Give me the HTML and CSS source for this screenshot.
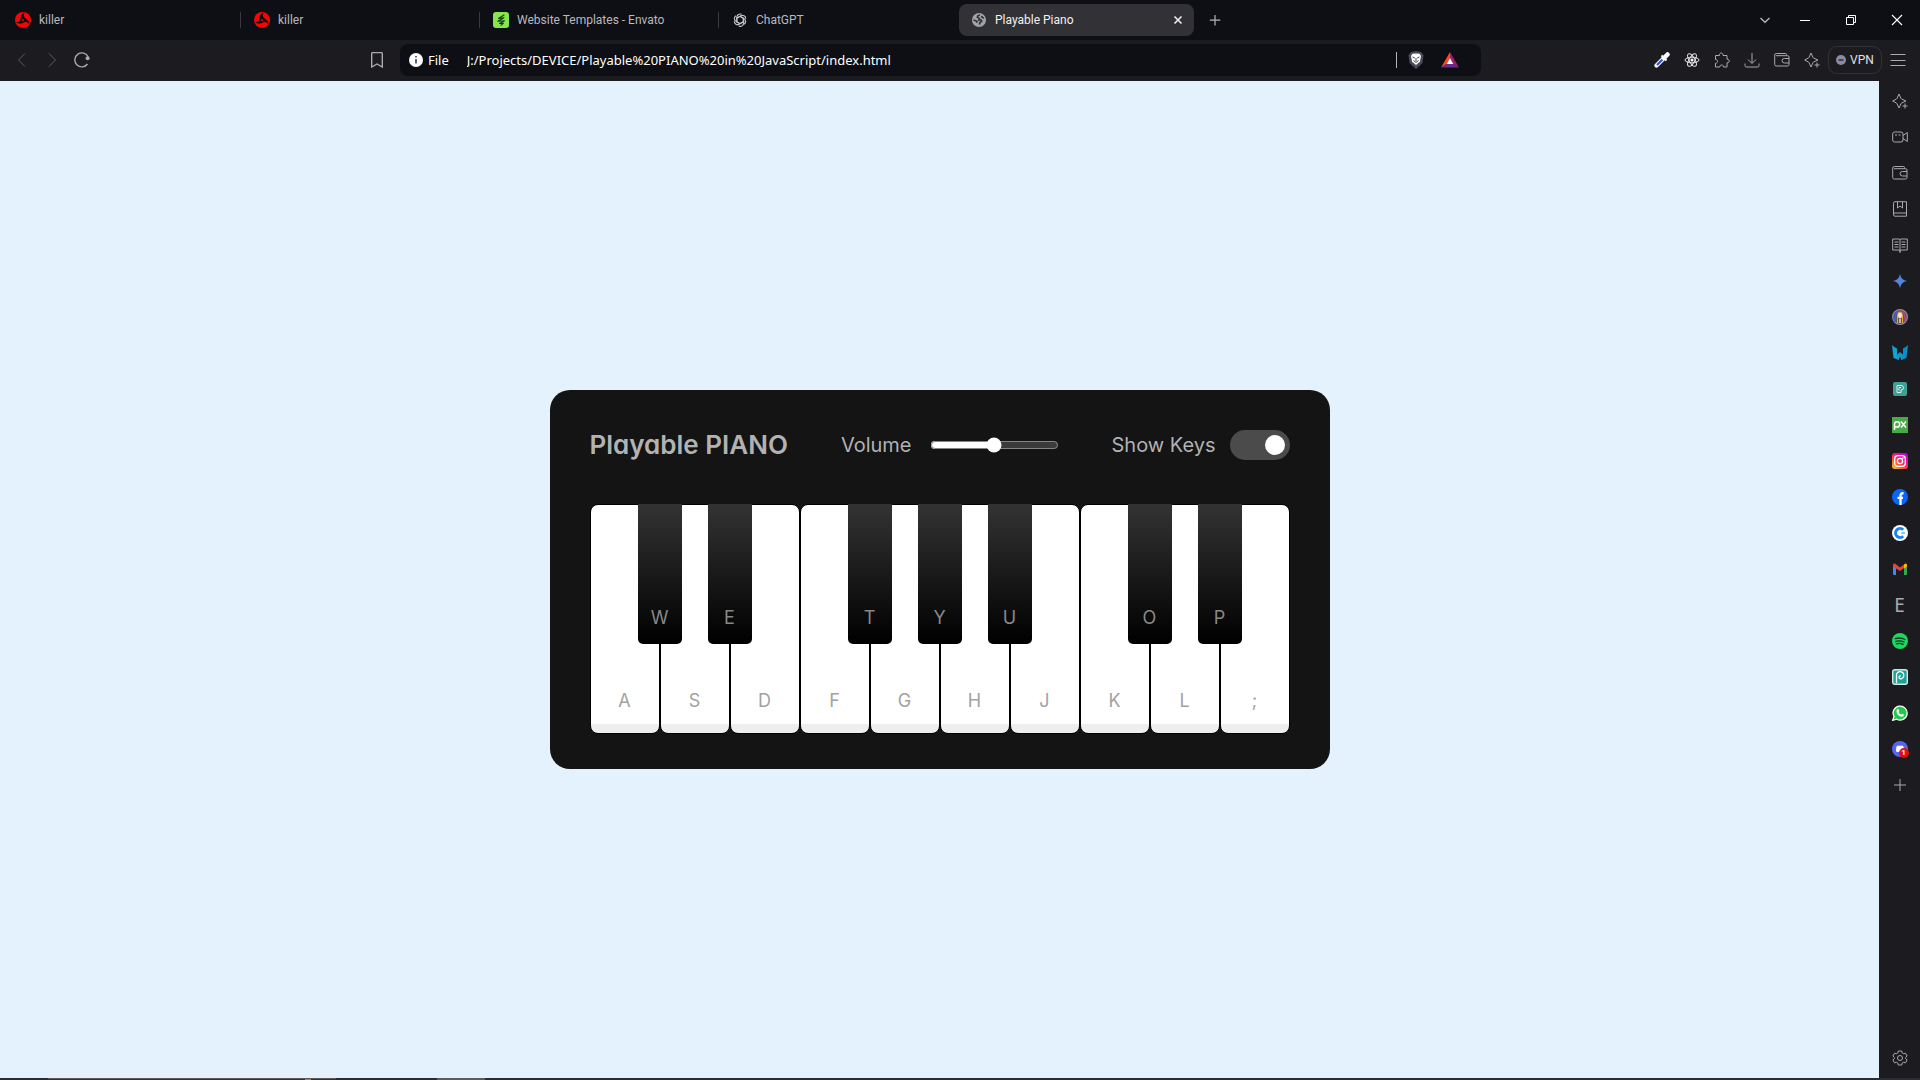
FILE: index.html
```html
<!DOCTYPE html>
<html lang="en">
<head>
<meta charset="utf-8">
<title>Playable Piano</title>
<link rel="stylesheet" href="styles.css">
</head>
<body>
<header class="tabstrip">
  <nav class="tabs" aria-label="Tabs">
    <a class="tab" href="#t1"><svg class="fav" viewBox="0 0 16 16"><circle cx="8" cy="8" r="8" fill="#f50505"/><g fill="#160505"><circle cx="8" cy="8" r="2.600"/><path d="M6 8C5 5 6 2 9.500 .5C8.500 3 9 5 10 6.500zM9 5.500C12 7 14.500 9 14.500 12C12.500 10 10 9.500 8 10zM9 10.500C7 12 3.500 12 1 10C4 10.500 5.500 8.500 6 6.500z"/></g><circle cx="8" cy="8" r="1" fill="#f50505"/></svg><span>killer</span></a>
    <a class="tab" href="#t2"><svg class="fav" viewBox="0 0 16 16"><circle cx="8" cy="8" r="8" fill="#f50505"/><g fill="#160505"><circle cx="8" cy="8" r="2.600"/><path d="M6 8C5 5 6 2 9.500 .5C8.500 3 9 5 10 6.500zM9 5.500C12 7 14.500 9 14.500 12C12.500 10 10 9.500 8 10zM9 10.500C7 12 3.500 12 1 10C4 10.500 5.500 8.500 6 6.500z"/></g><circle cx="8" cy="8" r="1" fill="#f50505"/></svg><span>killer</span></a>
    <a class="tab" href="#t3"><svg class="fav" viewBox="0 0 16 16"><rect width="16" height="16" rx="3" fill="#87e64b"/><path d="M11 3L5.500 6.500L11 5.700L4.800 9.300L11.500 8.700L6.500 11.500L10.500 11.200L8 13.300" fill="none" stroke="#123c12" stroke-width="1.100" stroke-linejoin="round" stroke-linecap="round"/></svg><span>Website Templates - Envato</span></a>
    <a class="tab" href="#t4"><svg class="fav" viewBox="1.500 1.500 13 13" fill="none" stroke="#c4c4c8" stroke-width=".9"><path d="M8 5L11 6.700V10.500A2.700 2.700 0 0 1 7 12.800"/><path d="M10.600 6.500L10.600 9.500L7.300 11.400A2.700 2.700 0 0 1 3.300 9.100"/><path d="M10.600 9.500L8 11L4.700 9.100A2.700 2.700 0 0 1 4.700 4.500"/><path d="M8 11L5.400 9.500V5.700A2.700 2.700 0 0 1 9.300 3.400"/><path d="M5.400 9.500V6.500L8.700 4.600A2.700 2.700 0 0 1 12.700 6.900"/><path d="M5.400 6.500L8 5L11.300 6.900A2.700 2.700 0 0 1 11.300 11.500"/></svg><span>ChatGPT</span></a>
    <a class="tab tab-active" href="#t5" aria-current="page"><svg class="fav" viewBox="0 0 16 16"><circle cx="8" cy="8" r="7" fill="#a0a3a8"/><path d="M9 3Q6 3.500 6.500 5.500Q9.500 6 8 8Q11.500 7.500 10.500 9.500Q8.500 10 8.500 12.500M2.500 8Q5.500 8.500 6.500 10.500M10.500 4Q11 6 13 6" fill="none" stroke="#333237" stroke-width="1.700"/></svg><span>Playable Piano</span></a>
    <button class="tab-close" aria-label="Close tab"><svg viewBox="0 0 16 16" stroke="#eee" stroke-width="1.600"><path d="M4.500 4.500l7 7m0-7l-7 7"/></svg></button>
  </nav>
  <button class="icon-btn new-tab" aria-label="New tab"><svg viewBox="0 0 16 16" stroke="#b4b4b8" stroke-width="1.200"><path d="M8 3v10.500M2.800 8.200h10.500"/></svg></button>
  <div class="window-controls">
    <button class="icon-btn" aria-label="Search tabs"><svg viewBox="0 0 16 16" fill="none" stroke="#b4b4b8" stroke-width="1.400"><path d="M3.500 6l4.500 4.200L12.500 6"/></svg></button>
    <button class="win-btn" aria-label="Minimize"><svg viewBox="0 0 16 16" stroke="#fff"><path d="M3 8.500h10"/></svg></button>
    <button class="win-btn" aria-label="Restore"><svg viewBox="0 0 16 16" fill="none" stroke="#fff"><path d="M3.500 5.500h7v7h-7zM5.500 5.500v-2h7v7h-2"/></svg></button>
    <button class="win-btn" aria-label="Close"><svg viewBox="0 0 16 16" stroke="#fff" stroke-width="1.100"><path d="M3 3l10 10M13 3L3 13"/></svg></button>
  </div>
</header>

<div class="toolbar">
  <button class="icon-btn dim" aria-label="Back"><svg viewBox="0 0 16 16"><path d="M11 1.500L4.500 8l6.500 6.500"/></svg></button>
  <button class="icon-btn dim" aria-label="Forward"><svg viewBox="0 0 16 16"><path d="M5 1.500L11.500 8L5 14.500"/></svg></button>
  <button class="icon-btn" aria-label="Reload"><svg viewBox="0 0 16 16"><path d="M14.200 5A7 7 0 1 0 13.500 12" stroke-width="1.400"/><circle cx="13.600" cy="6.200" r="2" fill="#a9a9ae" stroke="none"/></svg></button>
  <div class="location">
    <button class="icon-btn" aria-label="Bookmark"><svg viewBox="0 0 16 16"><path d="M2.700 15V1.800Q2.700 .6 4 .6H12Q13.300 .6 13.300 1.800V15L8 12z" stroke-width="1.400"/></svg></button>
    <label class="address">
      <svg viewBox="0 0 16 16"><circle cx="8" cy="8" r="7" fill="#fff"/><path d="M8 7v4.500M8 4v1.600" stroke="#333" stroke-width="1.500"/></svg>
      <span class="scheme">File</span>
      <input type="text" value="J:/Projects/DEVICE/Playable%20PIANO%20in%20JavaScript/index.html" aria-label="Address">
      <span class="bar"></span>
      <svg class="badge" viewBox="0 0 18 18"><path d="M9 0L14 1L16.500 4L15.500 12L9 18L2.500 12L1.500 4L4 1z" fill="#4a4a5a"/><path d="M9 2.500L12.500 2.800L14 5L13 10.500L9 14L5 10.500L4 5L5.500 2.800z" fill="#fff"/><path d="M5.500 6l2.300 1M12.500 6l-2.300 1M9 7v3M6.500 9.500L9 11.500L11.500 9.500" fill="none" stroke="#45454f"/></svg>
      <svg class="badge" viewBox="0 0 18 18"><path d="M9 1L0 16.500L6 12.700L9 7z" fill="#ff4724"/><path d="M9 1l9 15.500L12 12.700L9 7z" fill="#9e1f63"/><path d="M0 16.500h18L12 12.700H6z" fill="#662d91"/><path d="M9 7l3.300 5.900H5.700z" fill="#fff"/></svg>
    </label>
  </div>
  <button class="icon-btn" aria-label="Color picker"><svg viewBox="0 0 16 16"><path d="M2.500 13.500L10 6" stroke="#fff" stroke-width="4.200" stroke-linecap="round"/><path d="M3 13L8.500 7.500" stroke="#2f50d0" stroke-width="2.200"/><path d="M10 6L13.500 2.500" stroke="#fff" stroke-width="4.500" stroke-linecap="round"/><path d="M7.500 3.500l5 5" stroke="#fff" stroke-width="2"/></svg></button>
  <button class="icon-btn" aria-label="React tools"><svg viewBox="0 0 16 16"><g stroke="#e4e4e4"><ellipse cx="8" cy="8" rx="7" ry="2.800"/><ellipse cx="8" cy="8" rx="7" ry="2.800" transform="rotate(60 8 8)"/><ellipse cx="8" cy="8" rx="7" ry="2.800" transform="rotate(120 8 8)"/></g><circle cx="8" cy="8" r="1.500" fill="#fff" stroke="none"/></svg></button>
  <button class="icon-btn" aria-label="Extensions"><svg viewBox="0 0 16 16"><path d="M1.500 3.500H5.500C5 .2 9.500 .2 9 3.500H13V7.200C16 6.700 16 11.300 13 10.800V15H9.500C9.800 12.200 5.500 12.200 5.800 15H1.500V11.200C4.300 11.300 4.300 7.300 1.500 7.500z"/></svg></button>
  <button class="icon-btn" aria-label="Downloads"><svg viewBox="0 0 16 16"><path d="M8 1v10M4 7.500l4 4l4-4M1 11.500v2q0 1.500 1.500 1.500h11q1.500 0 1.500-1.500v-2"/></svg></button>
  <button class="icon-btn" aria-label="Wallet"><svg viewBox="0 0 16 16"><path d="M12.500 3.500V2.500Q12.500 1.500 11.500 1.500H2.500Q.7 1.500 .7 3V12.500Q.7 14 2.200 14H13.500Q15 14 15 12.500V5Q15 3.700 13.500 3.700H2M15 6.500H10.500Q8 6.500 8 8.700T10.500 11H15"/></svg></button>
  <button class="icon-btn" aria-label="Leo"><svg viewBox="0 0 16 16"><path d="M7 1L9 5.500Q9.300 6 10 6.200L14 8L10 9.800Q9.300 10 9 10.700L7 15L5 10.700Q4.700 10 4 9.800L.7 8L4 6.200Q4.700 6 5 5.500zM13 10.500v5M10.500 13h5"/></svg></button>
  <button class="vpn"><svg viewBox="0 0 10 10"><circle cx="5" cy="5" r="5" fill="#8a8ca3"/><path d="M2.500 5h5" stroke="#1c1b20" stroke-width="1.300"/></svg>VPN</button>
  <button class="icon-btn" aria-label="Menu"><svg viewBox="0 0 16 16"><path d="M.5 2.500h15M.5 8.500h15M.5 13.500h15"/></svg></button>
</div>

<div class="workspace">
  <main class="page">
    <section class="piano">
      <div class="piano-head">
        <h2>Playable PIANO</h2>
        <label class="control">Volume<input class="volume" type="range" min="0" max="1" step="any" value="0.5"></label>
        <label class="control">Show Keys<input class="toggle" type="checkbox" checked></label>
      </div>
      <div class="keys">
        <button class="key white">A</button>
        <button class="key black">W</button>
        <button class="key white">S</button>
        <button class="key black">E</button>
        <button class="key white">D</button>
        <button class="key white">F</button>
        <button class="key black">T</button>
        <button class="key white">G</button>
        <button class="key black">Y</button>
        <button class="key white">H</button>
        <button class="key black">U</button>
        <button class="key white">J</button>
        <button class="key white">K</button>
        <button class="key black">O</button>
        <button class="key white">L</button>
        <button class="key black">P</button>
        <button class="key white">;</button>
      </div>
    </section>
  </main>
  <aside class="sidebar">
    <button class="side-btn" aria-label="Leo"><svg viewBox="0 0 16 16"><path d="M7 1L9 5.500Q9.300 6 10 6.200L14 8L10 9.800Q9.300 10 9 10.700L7 15L5 10.700Q4.700 10 4 9.800L.7 8L4 6.200Q4.700 6 5 5.500zM13 10.500v5M10.500 13h5"/></svg></button>
    <button class="side-btn" aria-label="Talk"><svg viewBox="0 0 16 16"><path d="M2.500 3H9Q11 3 11 5V11Q11 13 9 13H2.500Q.7 13 .7 11V5Q.7 3 2.500 3zM11 6.500L15.300 3.500V12.500L11 9.500M3 6h2M6.500 6h2"/></svg></button>
    <button class="side-btn" aria-label="Wallet"><svg viewBox="0 0 16 16"><path d="M12.500 3.500V2.500Q12.500 1.500 11.500 1.500H2.500Q.7 1.500 .7 3V12.500Q.7 14 2.200 14H13.500Q15 14 15 12.500V5Q15 3.700 13.500 3.700H2M15 6.500H10.500Q8 6.500 8 8.700T10.500 11H15"/></svg></button>
    <button class="side-btn" aria-label="Bookmarks"><svg viewBox="0 0 16 16"><path d="M14.500 12V.7H3Q1.500 .7 1.500 2.200V13.500Q1.500 15.200 3 15.200H14.500V12H3Q1.500 12 1.500 13.500M5.500 1V7L8 5L10.500 7V1"/></svg></button>
    <button class="side-btn" aria-label="Reading list"><svg viewBox="0 0 16 16"><path d="M.7 2H7Q8 2 8 3Q8 2 9 2H15.300V13H9Q8 13 8 14.500Q8 13 7 13H.7zM8 3V16M2.500 5H6.500M2.500 7.500H6.500M2.500 10H6.500M9.500 5H13.500M9.500 7.500H13.500M9.500 10H13.500"/></svg></button>
    <button class="side-btn" aria-label="Gemini"><svg viewBox="0 0 16 16"><defs><linearGradient id="gem"><stop stop-color="#8a78cc"/><stop offset=".5" stop-color="#4d86e0"/><stop offset="1" stop-color="#4a90d8"/></linearGradient></defs><path d="M8 1Q9 7 15 8Q9 9 8 15Q7 9 1 8Q7 7 8 1z" fill="url(#gem)" stroke="none"/></svg></button>
    <button class="side-btn" aria-label="Chat arena"><svg viewBox="0 0 16 16" stroke-width="1.200"><circle cx="8" cy="8" r="7.400" fill="#5b4a4a" stroke="#8a8ca0"/><path d="M3 13Q2 6 6 2" stroke="#4060d8" stroke-width="2"/><path d="M13 13Q14 6 10 2" stroke="#c04088" stroke-width="1.700"/><path d="M5.500 14V7Q6 3 8 3T10.500 7V14" stroke="#e6a43c"/><ellipse cx="8" cy="6.500" rx="2" ry="3" fill="#f5e4cc" stroke="none"/><path d="M8 10v4" stroke="#fff"/></svg></button>
    <button class="side-btn" aria-label="Winged"><svg viewBox="0 0 16 16"><g stroke="none"><path d="M0 0Q3 3 5 3.500V10L7 12V15L1.500 13Z" fill="#12a4d2"/><path d="M16 0Q13 3 11 3.500V10L9 12V15L14.500 13Z" fill="#0a8fc4"/><path d="M4.500 10L8 7L11.500 10L10 15.500L8 12L6 15.500z" fill="#1693c6"/></g></svg></button>
    <button class="side-btn" aria-label="Pexels"><svg viewBox="0 0 16 16"><rect x="1" y="1" width="14" height="14" rx="2" fill="#429e94" stroke="none"/><path d="M5 4.500H9Q11.500 4.500 11.500 6.700T9 9V11.500H5zM7 9.500V6.500H9" stroke="#d5efec"/></svg></button>
    <button class="side-btn" aria-label="Pixabay"><svg viewBox="0 0 16 16"><rect width="16" height="16" fill="#48a947" stroke="none"/><path d="M2.500 13V7A2.600 2.600 0 1 1 5 10H3M9 4.500L14 10.500M14 4.500L9 10.500" stroke="#fff" stroke-width="1.500"/></svg></button>
    <button class="side-btn" aria-label="Instagram"><svg viewBox="0 0 16 16"><defs><linearGradient id="insta" x1="0" y1="1" x2=".8" y2="0"><stop stop-color="#ffcf30"/><stop offset=".35" stop-color="#ff5b20"/><stop offset=".65" stop-color="#f0168c"/><stop offset="1" stop-color="#b800e0"/></linearGradient></defs><rect width="16" height="16" rx="3" fill="url(#insta)" stroke="none"/><rect x="2.700" y="2.700" width="10.600" height="10.600" rx="3" stroke="#fff" stroke-width="1.300"/><circle cx="8" cy="8" r="2.600" stroke="#fff" stroke-width="1.300"/><circle cx="11" cy="5" r=".8" fill="#fff" stroke="none"/></svg></button>
    <button class="side-btn" aria-label="Facebook"><svg viewBox="0 0 16 16"><circle cx="8" cy="8" r="8" fill="#0866ff" stroke="none"/><path d="M8.500 16V6.500Q8.500 4 11.500 4.300M5.500 8.800h5.500" stroke="#fff" stroke-width="2.300"/></svg></button>
    <button class="side-btn" aria-label="Crunch"><svg viewBox="0 0 16 16"><circle cx="8" cy="8" r="8" fill="#fff" stroke="none"/><path d="M11.200 4.800A4.500 4.500 0 1 0 11.200 11.200" stroke="#1683f5" stroke-width="3"/><path d="M9.500 8h3.500" stroke="#35c2f5" stroke-width="1.500"/></svg></button>
    <button class="side-btn" aria-label="Gmail"><svg viewBox="0 0 16 16"><g stroke="none"><path d="M1 4L4 6V14H2Q1 14 1 13z" fill="#4285f4"/><path d="M15 4L12 6V14H14Q15 14 15 13z" fill="#34a853"/><path d="M1 4Q1 2 3 2.500L8 6.500L12 3.500V7L8 10L1 5.500z" fill="#ea4335"/><path d="M12 3.500Q14.500 1.500 15 4V5.500L12 7.500z" fill="#fbbc04"/></g></svg></button>
    <button class="side-btn side-letter">E</button>
    <button class="side-btn" aria-label="Spotify"><svg viewBox="0 0 16 16"><circle cx="8" cy="8" r="8" fill="#1ed760" stroke="none"/><path d="M3.200 5.700Q8.500 4 13 6.500M3.800 8.300Q8.300 7 12 9M4.300 10.800Q8 9.800 11 11.400" stroke="#15331f" stroke-width="1.300" stroke-linecap="round"/></svg></button>
    <button class="side-btn" aria-label="Photopea"><svg viewBox="0 0 16 16"><rect x=".7" y=".7" width="14.600" height="14.600" rx="2" fill="#18a497" stroke="#d6e8e6" stroke-width="1.400"/><path d="M4.500 14V7A3.700 3.700 0 1 1 8.500 10Q6.800 9.500 7 8T9 7" stroke="#fff" stroke-width="1.300"/></svg></button>
    <button class="side-btn" aria-label="WhatsApp"><svg viewBox="0 0 16 16"><path d="M.7 15.300L2 11.500A7 7 0 1 1 4.700 14.200z" fill="#25c94a" stroke="#fff" stroke-width="1.300"/><path d="M5 4.500Q5.800 3.500 6.500 4.500L7.200 6L6.500 7Q7.500 9 9.300 9.700L10.200 8.800L12 9.700Q12 12 9.500 11.800Q4.500 10.500 4.500 6z" fill="#fff" stroke="none"/></svg></button>
    <button class="side-btn" aria-label="Discord"><svg viewBox="0 0 16 16"><circle cx="8" cy="8" r="8" fill="#5865f2" stroke="none"/><path d="M4 10.500Q3.500 7 5 4.800H11Q12.500 7 12 10.500Q8 11.500 4 10.500z" fill="#fff" stroke="none"/></svg><span class="count">1</span></button>
    <button class="side-btn" aria-label="Add"><svg viewBox="0 0 16 16"><path d="M8 2v12M2 8h12"/></svg></button>
    <button class="side-btn settings" aria-label="Settings"><svg viewBox="0 0 16 16"><path d="M6.300 1h3.400l.5 2l1.300.7l2-.5l1.600 2.800l-1.400 1.400v1.200l1.400 1.400l-1.600 2.800l-2-.5l-1.300.7l-.5 2H6.300l-.5-2l-1.300-.7l-2 .5L.9 10l1.400-1.400V7.400L.9 6l1.600-2.800l2 .5L5.800 3z"/><circle cx="8" cy="8" r="2.500"/></svg></button>
  </aside>
</div>
<footer class="taskbar"><span class="task-search"><span class="task-dot"></span></span><span class="task-app"></span></footer>
</body>
</html>
```
FILE: styles.css
```css
* { box-sizing: border-box; }

body {
  margin: 0;
  min-height: 100vh;
  display: flex;
  flex-direction: column;
  font-family: Roboto, "Open Sans", sans-serif;
  font-size: 12px;
  background: #1c1b20;
  color: #c4c4c8;
}

button {
  margin: 0;
  padding: 0;
  border: 0;
  background: none;
  color: inherit;
  font: inherit;
}

svg { display: block; width: 16px; height: 16px; flex: none; }

/* Tab strip */
.tabstrip { display: flex; align-items: center; height: 40px; background: #0e0f14; }
.tabs { display: flex; align-items: center; padding-left: 2px; }
.tab {
  display: flex;
  align-items: center;
  gap: 8px;
  width: 239px;
  height: 16px;
  padding-left: 13px;
  border-right: 1px solid #39393e;
  color: #b9b9bd;
  text-decoration: none;
  white-space: nowrap;
}
.tab:nth-child(4) { border-color: transparent; }
.tab-active {
  width: 205px;
  height: 32px;
  margin-left: 1px;
  padding-left: 12px;
  border: 0;
  border-radius: 8px 0 0 8px;
  background: #323136;
  color: #f0f0f0;
}
.tab-close {
  display: flex;
  align-items: center;
  width: 30px;
  height: 32px;
  padding-left: 6px;
  border-radius: 0 8px 8px 0;
  background: #323136;
}
.icon-btn {
  display: flex;
  align-items: center;
  justify-content: center;
  width: 30px;
  height: 32px;
  flex: none;
}
.new-tab { margin-left: 6px; }
.window-controls { display: flex; margin-left: auto; }
.win-btn { display: flex; align-items: center; justify-content: center; width: 46px; height: 32px; }
.window-controls .icon-btn { margin-right: 2px; }

/* Toolbar */
.toolbar {
  display: flex;
  align-items: center;
  height: 41px;
  padding: 0 7px 1px;
  background: #1c1b20;
}
.toolbar .icon-btn svg, .side-btn svg { fill: none; stroke: #a9a9ae; }
.toolbar .dim svg { stroke: #5b5b60; }
.location { display: flex; flex: 1; gap: 8px; margin: 0 8.7% 0 13.9%; }
.address {
  display: flex;
  align-items: center;
  flex: 1;
  height: 32px;
  padding: 0 22px 0 8px;
  border-radius: 8px;
  background: #0e0f14;
  color: #fff;
  font-family: "Noto Sans", sans-serif;
  font-size: 13px;
}
.scheme { margin: 0 18px 0 4px; }
.address input {
  flex: 1;
  min-width: 0;
  padding: 0;
  border: 0;
  outline: 0;
  background: none;
  color: inherit;
  font: inherit;
}
.bar { width: 1px; height: 16px; background: #b4b4b8; }
.badge { width: 18px; height: 18px; margin-left: 10px; }
.badge + .badge { margin-left: 16px; }
.vpn {
  display: flex;
  align-items: center;
  justify-content: center;
  gap: 4px;
  width: 54px;
  height: 28px;
  margin: 0 1px;
  border: 1px solid #303036;
  border-radius: 9px;
  color: #e0e0e4;
}
.vpn svg { width: 10px; height: 10px; }

/* Page and sidebar */
.workspace { display: flex; flex: 1; }
.page {
  flex: 1;
  display: flex;
  align-items: center;
  justify-content: center;
  background: #e3f2fd;
}
.sidebar {
  display: flex;
  flex-direction: column;
  align-items: center;
  width: 41px;
  padding: 2px 0;
  background: #1c1b20;
}
.side-btn {
  position: relative;
  display: flex;
  align-items: center;
  justify-content: center;
  width: 36px;
  height: 36px;
}
.side-letter { color: #a9a9ae; font-family: "Noto Sans", sans-serif; font-size: 19px; }
.settings { margin-top: auto; }
.count {
  position: absolute;
  right: 9px;
  bottom: 9px;
  width: 10px;
  height: 10px;
  border-radius: 5px;
  background: #e01010;
  color: #fff;
  font-size: 8px;
  font-weight: 700;
  line-height: 10px;
  text-align: center;
}

/* Piano */
.piano {
  padding: 35px 40px;
  border-radius: 20px;
  background: #141414;
  font-family: Inter, "Open Sans", sans-serif;
  font-feature-settings: "cv11";
}
.piano-head {
  display: flex;
  align-items: center;
  justify-content: space-between;
  color: #b2b2b2;
}
.piano-head h2 { margin: 0; font-size: 26px; font-weight: 600; line-height: 39px; }
.control { display: flex; align-items: center; font-size: 20px; line-height: 28px; }
.volume { width: 129px; margin: 0 0 0 18px; accent-color: #fff; }
.toggle {
  display: flex;
  align-items: center;
  justify-content: flex-end;
  width: 60px;
  height: 30px;
  margin: 0 0 0 14px;
  padding: 5px;
  border-radius: 30px;
  background: #4b4b4b;
  appearance: none;
}
.toggle::before { content: ""; width: 20px; height: 20px; border-radius: 50%; background: #fff; }
.toggle:not(:checked) { justify-content: flex-start; }
.keys { display: flex; margin-top: 40px; }
.key {
  display: flex;
  align-items: flex-end;
  justify-content: center;
  font-size: 18px;
  line-height: 26px;
}
.white {
  width: 70px;
  height: 230px;
  padding-bottom: 19px;
  border: 1px solid #000;
  border-radius: 8px;
  background: linear-gradient(#fff 96%, #eee 4%);
  color: #a2a2a2;
}
.black {
  position: relative;
  z-index: 2;
  width: 44px;
  height: 140px;
  margin: 0 -22px;
  padding-bottom: 13px;
  border-radius: 0 0 5px 5px;
  background: linear-gradient(#333, #000);
  color: #888;
}

/* Top edge of the desktop taskbar */
.taskbar { display: flex; height: 2px; background: #2a2d33; }
.task-search { width: 288px; margin-left: 48px; padding-left: 257px; border-top: 1px solid #5a5a5a; background: #333; }
.task-dot { display: block; width: 6px; height: 1px; background: #a9805f; }
.task-app { width: 48px; margin-left: 101px; background: #5a5c5e; }
```
